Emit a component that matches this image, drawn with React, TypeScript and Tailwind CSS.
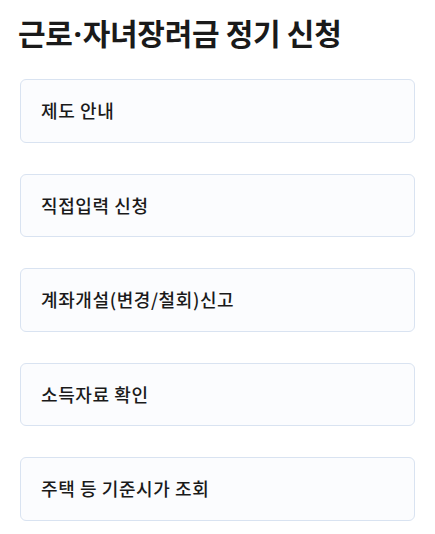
const items = [
  "제도 안내",
  "직접입력 신청",
  "계좌개설(변경/철회)신고",
  "소득자료 확인",
  "주택 등 기준시가 조회",
];

export default function App() {
  return (
    <div
      className="min-h-screen bg-white px-5 pt-[11px] text-[#1a1a1a]"
      style={{ fontFamily: '"Noto Sans CJK KR", "Noto Sans", sans-serif' }}
    >
      <h1 className="-ml-[2px] h-[42px] text-[30px] leading-[42px] font-bold tracking-[-0.3px]">
        근로<span className="font-['Noto_Sans'] mx-[1px]">·</span>자녀장려금 정기 신청
      </h1>
      <ul className="mt-[26px] flex flex-col gap-[31px]">
        {items.map((label) => (
          <li key={label}>
            <button className="flex h-[63.5px] w-full items-center rounded-md border border-[#d9e3f1] bg-[#fbfcfe] px-5 text-left text-[18px] font-medium tracking-[0.6px]">
              {label}
            </button>
          </li>
        ))}
      </ul>
    </div>
  );
}
